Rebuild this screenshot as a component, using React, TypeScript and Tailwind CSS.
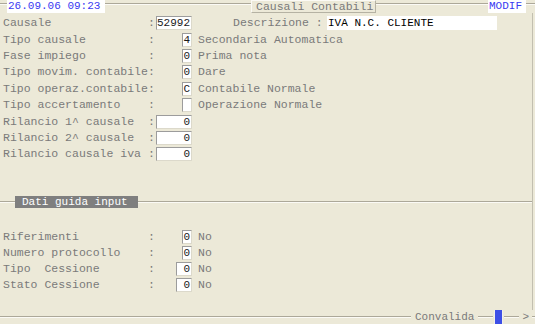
import React from "react";

interface FieldRow {
  label: string;
  value: string;
  boxWidth: string;
  desc?: string;
}

const mainRows: FieldRow[] = [
  { label: "Tipo causale", value: "4", boxWidth: "w-[10px]", desc: "Secondaria Automatica" },
  { label: "Fase impiego", value: "0", boxWidth: "w-[10px]", desc: "Prima nota" },
  { label: "Tipo movim. contabile", value: "0", boxWidth: "w-[10px]", desc: "Dare" },
  { label: "Tipo operaz.contabile", value: "C", boxWidth: "w-[10px]", desc: "Contabile Normale" },
  { label: "Tipo accertamento", value: "", boxWidth: "w-[10px]", desc: "Operazione Normale" },
  { label: "Rilancio 1^ causale", value: "0", boxWidth: "w-[37px]" },
  { label: "Rilancio 2^ causale", value: "0", boxWidth: "w-[37px]" },
  { label: "Rilancio causale iva", value: "0", boxWidth: "w-[37px]" },
];

const guideRows: FieldRow[] = [
  { label: "Riferimenti", value: "0", boxWidth: "w-[10px]", desc: "No" },
  { label: "Numero protocollo", value: "0", boxWidth: "w-[10px]", desc: "No" },
  { label: "Tipo  Cessione", value: "0", boxWidth: "w-[16px]", desc: "No" },
  { label: "Stato Cessione", value: "0", boxWidth: "w-[16px]", desc: "No" },
];

const boxCls =
  "h-[14px] bg-white border border-[#dcd9cb] border-t-[#9c9c9c] border-l-[#9c9c9c] flex items-center justify-end pr-[1px] text-[11px] leading-[12px] text-[#1a1a1a]";

function Label({ text }: { text: string }) {
  return (
    <span className="w-[156px] pl-[3px] whitespace-pre shrink-0">
      {text.padEnd(21, " ") + ":"}
    </span>
  );
}

function Row({ row, h }: { row: FieldRow; h: string }) {
  return (
    <div className={`flex items-center ${h}`}>
      <Label text={row.label} />
      <div className="w-[36px] flex justify-end shrink-0">
        <div className={`${boxCls} ${row.boxWidth}`}>{row.value}</div>
      </div>
      {row.desc && <span className="ml-[6px] whitespace-pre">{row.desc}</span>}
    </div>
  );
}

function Line() {
  return <div className="h-[2px] border-t border-[#aca899] border-b border-b-[#fbfaf5]" />;
}

export default function App() {
  return (
    <div
      className="w-[535px] h-[324px] bg-[#ECE9D8] text-[#7a7a7a] text-[11.5px] leading-[14px] flex flex-col overflow-hidden"
      style={{ fontFamily: '"Liberation Mono", "DejaVu Sans Mono", monospace' }}
    >
      {/* Header */}
      <div className="flex items-start h-[13px] shrink-0">
        <div className="w-[7px] mt-[3px]"><Line /></div>
        <div className="bg-white text-[#3a3af2] text-[11px] leading-[13px] h-[13px] w-[98px] pl-[1px] shrink-0">
          26.09.06 09:23
        </div>
        <div className="w-[146px] mt-[3px] shrink-0"><Line /></div>
        <div className="h-[13px] border border-[#b5b2a3] border-t-[#fbfaf5] border-l-[#fbfaf5] pl-[4px] text-[11.5px] leading-[11px] whitespace-pre w-[125px] shrink-0">
          Causali Contabili
        </div>
        <div className="w-[112px] mt-[3px] shrink-0"><Line /></div>
        <div className="bg-white text-[#3a3af2] text-[11px] leading-[13px] h-[13px] w-[38px] pl-[1px] shrink-0">
          MODIF
        </div>
        <div className="flex-1 mt-[3px]"><Line /></div>
      </div>

      {/* Body */}
      <div className="w-[533px] flex-1 border-r border-[#c2bfb0] flex flex-col">
        <div className="mt-[2px] flex flex-col">
          <div className="flex items-center h-[16.4px]">
            <Label text="Causale" />
            <div className={`${boxCls} w-[36px]`}>52992</div>
            <span className="ml-[41px] w-[94px] whitespace-pre">Descrizione :</span>
            <div className="h-[14px] w-[170px] bg-white text-black text-[11px] leading-[12px] pl-[1px] flex items-center">
              IVA N.C. CLIENTE
            </div>
          </div>
          {mainRows.map((r) => (
            <Row key={r.label} row={r} h="h-[16.4px]" />
          ))}
        </div>

        {/* Dati guida input */}
        <div className="mt-[33px] flex items-center h-[12px]">
          <div className="w-[15px]"><Line /></div>
          <div className="bg-[#7f7f7f] text-white text-[11px] leading-[12px] h-[12px] w-[123px] pl-[7px] whitespace-pre">
            Dati guida input
          </div>
          <div className="flex-1"><Line /></div>
        </div>

        <div className="mt-[21px] flex flex-col">
          {guideRows.map((r) => (
            <Row key={r.label} row={r} h="h-[16.2px]" />
          ))}
        </div>
      </div>

      {/* Footer */}
      <div className="flex items-center h-[14px] shrink-0">
        <div className="w-[411px]"><Line /></div>
        <span className="text-[11px] px-[4px] whitespace-pre">Convalida</span>
        <div className="w-[15px]"><Line /></div>
        <div className="w-[9px] h-[14px] bg-[#3d4fe6] border-l border-r border-[#f2f1ea] mx-[1px]" />
        <div className="w-[15px]"><Line /></div>
        <span className="text-[11px] px-[3px]">&gt;</span>
        <div className="flex-1"><Line /></div>
      </div>
    </div>
  );
}
